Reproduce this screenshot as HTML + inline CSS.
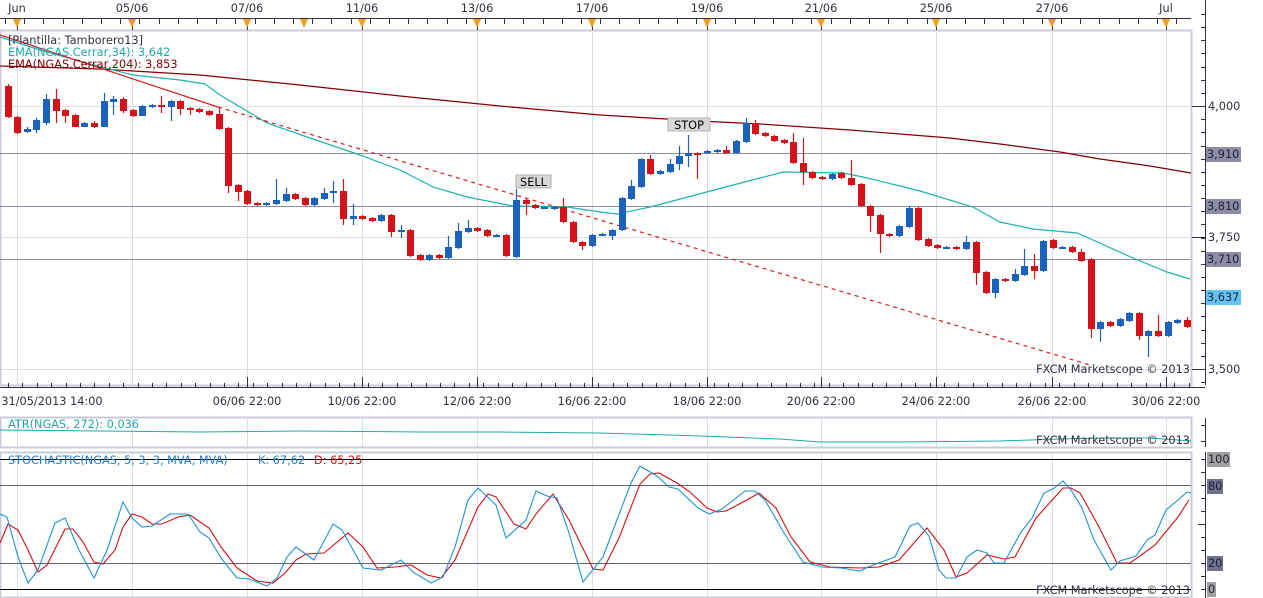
<!DOCTYPE html>
<html><head><meta charset="utf-8"><style>
html,body{margin:0;padding:0;background:#fff;width:1263px;height:598px;overflow:hidden}
svg{display:block}
text{font-family:"DejaVu Sans","Liberation Sans",sans-serif;font-size:11.3px}
</style></head><body>
<svg id="s" width="1263" height="598" viewBox="0 0 1263 598" xmlns="http://www.w3.org/2000/svg">
<rect width="1263" height="598" fill="#fff"/>
<g id="grid"></g>
<rect x="0.5" y="30.5" width="1191" height="355" fill="none" stroke="#c8ccd8" stroke-width="2"/>
<rect x="0.5" y="417.5" width="1191" height="30" fill="none" stroke="#c8ccd8" stroke-width="2"/>
<rect x="0.5" y="452.5" width="1191" height="145" fill="none" stroke="#c8ccd8" stroke-width="2"/>
<g stroke="#8c8ca8" stroke-width="1">
<line x1="0" y1="153.5" x2="1191" y2="153.5"/>
<line x1="0" y1="206.5" x2="1191" y2="206.5"/>
<line x1="0" y1="259.5" x2="1191" y2="259.5"/>
<line x1="0" y1="485.5" x2="1191" y2="485.5" stroke="#606070"/>
<line x1="0" y1="563.5" x2="1191" y2="563.5" stroke="#606070"/>
</g>
<line x1="0" y1="459.5" x2="1191" y2="459.5" stroke="#000"/>
<line x1="0" y1="589.5" x2="1191" y2="589.5" stroke="#000"/>
<polyline fill="none" stroke="#800000" stroke-width="1.2" points="0,66 100,69 200,75 300,85 400,96 500,106 600,115 700,121 760,124 850,130 950,138 1000,144 1060,152 1100,159 1150,166 1191,173"/>
<polyline fill="none" stroke="#20b0b0" stroke-width="1.2" points="0,37 40,50 90,64 133,75 180,80 205,84 220,95 267,123 310,138 360,155 400,170 433,187 467,197 513,206 567,207 600,212 617,214 650,207 733,185 783,172 843,173 863,177 900,186 920,191 973,207 1000,222 1033,229 1077,233 1093,240 1133,258 1167,272 1190,279"/>
<line x1="0" y1="35" x2="218" y2="107" stroke="#d02020" stroke-width="1.2"/>
<line x1="218" y1="107" x2="1090" y2="365" stroke="#d02020" stroke-width="1.2" stroke-dasharray="4,4"/>
<g id="candles"></g>
<rect x="516" y="175" width="35" height="13" fill="#d8d8d8" stroke="#b0b0b0"/>
<text x="533.5" y="186" text-anchor="middle" fill="#000">SELL</text>
<rect x="668" y="118" width="42" height="13" fill="#d8d8d8" stroke="#b0b0b0"/>
<text x="689" y="129" text-anchor="middle" fill="#000">STOP</text>
<text x="8" y="44" fill="#303040">[Plantilla: Tamborero13]</text>
<text x="8" y="56" fill="#20a8a8">EMA(NGAS.Cerrar,34): 3,642</text>
<text x="8" y="68" fill="#800000">EMA(NGAS.Cerrar,204): 3,853</text>
<text x="1190" y="373" text-anchor="end" fill="#303040">FXCM Marketscope © 2013</text>
<polyline fill="none" stroke="#20a8a8" stroke-width="1" points="0,430 100,431 200,432 300,431 420,432 500,432 600,433 700,436 780,439 820,442 900,442 1000,441 1060,439 1100,438 1150,438 1191,441"/>
<text x="8" y="428" fill="#20a8a8">ATR(NGAS, 272): 0,036</text>
<text x="1190" y="444" text-anchor="end" fill="#303040">FXCM Marketscope © 2013</text>
<text x="8" y="464" fill="#2080d0">STOCHASTIC(NGAS, 5, 3, 3, MVA, MVA)</text>
<text x="258" y="464" fill="#2080d0">K: 67,62</text>
<text x="314" y="464" fill="#d01010">D: 65,25</text>
<polyline fill="none" stroke="#d01010" stroke-width="1.1" points="0,543 8,524 18,530 28,550 38,572 47,565 65,529 73,529 83,542 94,562 103,564 115,550 123,527 132,514 142,517 152,524 162,524 178,517 190,515 209,528 221,547 237,568 257,581 273,583 285,573 296,560 306,554 324,553 348,533 363,547 377,568 395,567 411,565 427,575 441,578 455,560 478,507 488,494 496,497 514,524 526,529 536,514 553,494 569,520 593,569 603,570 619,538 640,484 650,474 659,473 677,483 690,492 707,508 717,512 726,511 745,501 759,493 776,508 791,537 810,562 830,567 860,568 879,567 899,560 927,528 944,550 956,577 967,573 987,555 1004,559 1015,557 1036,518 1063,488 1071,488 1080,493 1098,525 1117,563 1130,563 1155,545 1178,517 1189,500"/>
<polyline fill="none" stroke="#2090d8" stroke-width="1.1" points="0,514 7,517 18,557 28,583 38,570 55,523 65,518 79,550 94,578 107,550 123,502 132,518 142,527 152,526 170,514 188,514 200,532 209,538 221,558 237,578 249,579 267,586 277,578 287,557 296,547 314,560 333,524 342,530 363,568 381,570 401,560 413,572 431,583 443,577 455,547 468,500 478,488 496,505 506,538 526,520 536,491 547,496 557,498 569,533 583,582 603,557 615,525 631,483 640,466 657,476 669,487 678,489 698,508 709,514 722,509 745,491 755,491 765,500 784,533 803,562 822,567 841,568 860,571 868,567 895,557 910,526 918,523 929,536 939,570 946,578 956,578 967,557 977,550 987,553 994,563 1004,563 1021,532 1032,518 1044,493 1053,489 1063,481 1071,490 1082,508 1094,540 1111,570 1120,561 1136,556 1147,540 1155,535 1166,510 1178,500 1187,492 1191,493"/>
<text x="1190" y="594" text-anchor="end" fill="#303040">FXCM Marketscope © 2013</text>
<g id="axes" stroke="#303040" stroke-width="1"></g>
<g id="axtext"></g>
</svg>
<script>
var NS="http://www.w3.org/2000/svg";
function el(p,t,a,txt){var e=document.createElementNS(NS,t);for(var k in a)e.setAttribute(k,a[k]);if(txt!=null)e.textContent=txt;document.getElementById(p).appendChild(e);return e;}
var gx=[17,132,247,362,477,592,707,821,936,1052,1166];
gx.forEach(function(x){
 el('grid','line',{x1:x+.5,y1:30,x2:x+.5,y2:385,stroke:'#dcdee6'});
 el('grid','line',{x1:x+.5,y1:418,x2:x+.5,y2:447,stroke:'#dcdee6'});
 el('grid','line',{x1:x+.5,y1:453,x2:x+.5,y2:597,stroke:'#dcdee6'});
});
[106,237,369].forEach(function(y){el('grid','line',{x1:0,y1:y+.5,x2:1191,y2:y+.5,stroke:'#dcdee6'});});
var C=[[8,86,117,84,118],[17,117,133,116,134],[27,132,129,127,133],[36,130,120,118,133],[46,123,99,94,125],[56,99,111,89,123],[65,110,116,109,123],[75,115,127,114,127],[84,127,123,122,127],[94,123,127,121,128],[104,127,101,93,127],[113,102,99,96,115],[123,99,111,97,113],[133,110,116,109,117],[142,116,106,105,116],[152,107,105,104,108],[161,105,106,96,113],[171,107,101,100,121],[180,101,109,100,115],[190,108,110,107,115],[199,109,112,108,113],[209,111,115,110,116],[219,114,129,108,130],[228,128,186,127,193],[238,185,192,184,201],[247,191,204,190,205],[257,203,205,202,206],[266,205,203,202,206],[276,204,200,179,205],[286,201,194,188,202],[295,194,199,193,200],[305,198,205,197,206],[314,205,198,197,206],[324,199,193,188,200],[333,193,191,181,203],[343,191,219,179,225],[353,219,216,204,225],[362,216,219,215,220],[372,218,221,217,222],[381,221,215,214,222],[391,215,232,214,237],[401,232,230,225,238],[410,230,256,229,257],[420,255,260,254,261],[429,260,255,254,261],[439,255,258,254,259],[448,258,247,236,259],[458,248,231,223,249],[468,232,228,220,233],[477,228,231,227,232],[487,230,236,229,237],[496,236,235,234,237],[506,235,256,234,257],[516,257,200,189,258],[526,200,204,199,215],[535,205,208,204,209],[544,208,207,206,209],[554,209,207,206,210],[563,207,222,198,223],[573,222,242,221,243],[582,242,246,241,250],[592,246,235,234,247],[602,235,234,233,236],[612,236,230,229,240],[622,230,198,197,231],[631,199,186,180,200],[641,187,159,158,188],[650,159,174,155,175],[660,174,171,170,175],[670,172,164,159,173],[679,164,156,146,170],[688,156,153,135,167],[697,153,154,152,179],[707,153,151,150,154],[717,152,150,149,153],[726,150,153,146,154],[736,153,141,140,154],[746,142,123,118,143],[755,123,134,120,135],[765,133,136,132,137],[774,136,141,135,142],[784,140,143,139,144],[793,142,163,133,164],[803,163,172,138,185],[812,172,178,171,179],[822,177,179,176,180],[832,179,174,173,180],[841,173,178,172,179],[851,178,185,160,186],[861,184,206,183,207],[870,206,216,205,232],[880,215,234,214,253],[889,234,236,233,237],[899,236,226,225,237],[909,227,208,206,228],[918,208,240,207,241],[928,239,246,238,247],[937,245,248,244,249],[946,248,247,246,249],[956,247,249,246,250],[966,249,242,236,250],[976,242,273,241,285],[986,272,293,271,294],[995,293,279,278,298],[1005,279,281,278,282],[1015,281,274,269,282],[1024,275,266,249,276],[1034,266,271,254,279],[1043,271,241,240,272],[1053,240,248,239,249],[1062,248,247,246,249],[1072,247,252,246,253],[1081,252,261,249,262],[1091,259,329,258,338],[1100,329,322,321,342],[1110,322,326,321,327],[1120,326,319,318,327],[1129,321,313,312,322],[1139,313,336,312,340],[1148,336,331,330,357],[1158,331,336,315,337],[1168,336,322,321,337],[1177,323,320,319,324],[1187,320,327,317,328]];
C.forEach(function(c){
 var down=c[2]>c[1],col=down?'#d4121a':'#1a62bc';
 el('candles','line',{x1:c[0]+.5,y1:c[3],x2:c[0]+.5,y2:c[4],stroke:col,'stroke-width':1.2});
 var t=Math.min(c[1],c[2]),h=Math.max(Math.abs(c[2]-c[1]),2);
 el('candles','rect',{x:c[0]-3,y:t,width:7,height:h,fill:col});
});
el('axes','line',{x1:0,y1:18.5,x2:1191,y2:18.5});
for(var x=5;x<1191;x+=19.2){el('axes','line',{x1:Math.round(x)+.5,y1:18,x2:Math.round(x)+.5,y2:24});}
var tl=[['Jun',17],['05/06',132],['07/06',247],['11/06',362],['13/06',477],['17/06',592],['19/06',707],['21/06',821],['25/06',936],['27/06',1052],['Jul',1166]];
tl.forEach(function(a){el('axtext','text',{x:a[1],y:12,'text-anchor':'middle',fill:'#303040'},a[0]);el('axes','line',{x1:a[1]+.5,y1:18,x2:a[1]+.5,y2:30});});
[17,132,247,304,362,477,592,707,821,936,1052,1166].forEach(function(x){el('axtext','polygon',{points:(x-4)+',19 '+(x+4)+',19 '+x+',28',fill:'#f0a020'});});
el('axes','line',{x1:1205.5,y1:0,x2:1205.5,y2:385});
el('axes','line',{x1:1205.5,y1:418,x2:1205.5,y2:447});
el('axes','line',{x1:1205.5,y1:452,x2:1205.5,y2:598});
for(var y=14;y<385;y+=13.15){el('axes','line',{x1:1201,y1:Math.round(y)+.5,x2:1206,y2:Math.round(y)+.5});}
[[106,'4,000'],[237,'3,750'],[369,'3,500']].forEach(function(a){el('axes','line',{x1:1192,y1:a[0]+.5,x2:1206,y2:a[0]+.5});el('axtext','text',{x:1208,y:a[0]+4,fill:'#303040'},a[1]);});
function box(y,t,bg,fg){el('axtext','rect',{x:1206,y:y-7,width:35,height:15,fill:bg});el('axtext','text',{x:1207,y:y+4,fill:fg},t);}
box(154,'3,910','#8c8ca8','#202030');box(206,'3,810','#8c8ca8','#202030');box(259,'3,710','#8c8ca8','#202030');box(297,'3,637','#60c4f4','#202030');
[425,441].forEach(function(y){el('axes','line',{x1:1201,y1:y+.5,x2:1206,y2:y+.5});});
for(var v=0;v<=100;v+=10){var yy=Math.round(589-1.3*v)+.5;el('axes','line',{x1:(v==50?1198:1201),y1:yy,x2:1206,y2:yy});}
function sbox(y,t,bg,w){el('axtext','rect',{x:1207,y:y-7,width:w,height:15,fill:bg});el('axtext','text',{x:1208,y:y+4,fill:'#202030'},t);}
sbox(459,'100','#a0a0a0',23);sbox(486,'80','#707090',16);sbox(563,'20','#707090',16);sbox(589,'0','#a0a0a0',9);
el('axes','line',{x1:0,y1:387.5,x2:1205,y2:387.5});
for(var x=8;x<1191;x+=14.4){el('axes','line',{x1:Math.round(x)+.5,y1:383,x2:Math.round(x)+.5,y2:388});}
var bl=[['31/05/2013 14:00',52],['06/06 22:00',247],['10/06 22:00',362],['12/06 22:00',477],['16/06 22:00',592],['18/06 22:00',707],['20/06 22:00',821],['24/06 22:00',936],['26/06 22:00',1052],['30/06 22:00',1166]];
bl.forEach(function(a){el('axtext','text',{x:a[1],y:405,'text-anchor':'middle',fill:'#303040'},a[0]);if(a[1]>100)el('axes','line',{x1:a[1]+.5,y1:377,x2:a[1]+.5,y2:388});});
</script>
</body></html>
